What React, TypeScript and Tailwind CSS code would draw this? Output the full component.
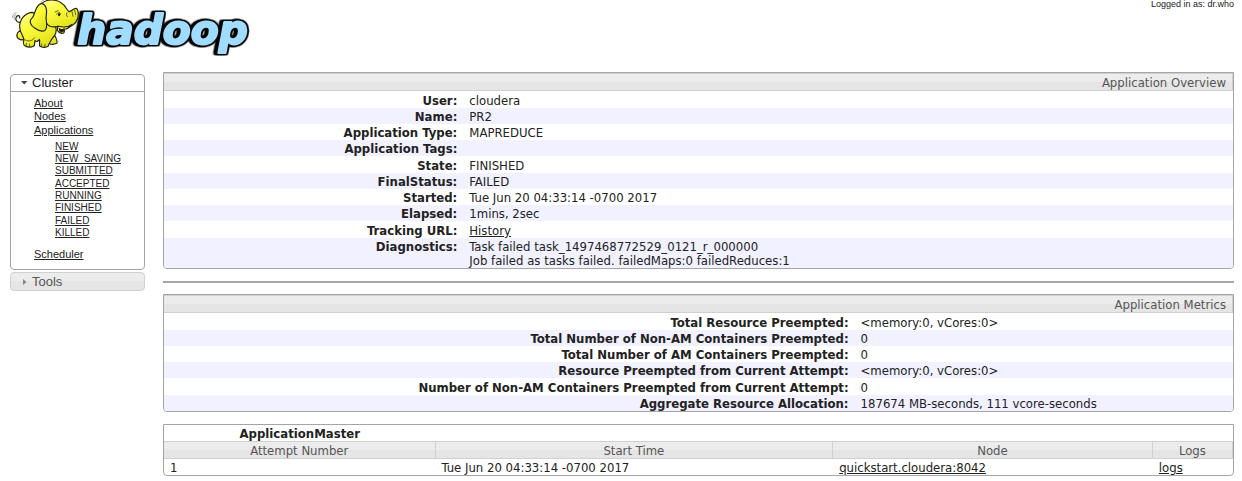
import React from "react";

type Field = { label: string; value: React.ReactNode };

const linkClass = "text-[#222] underline";

const overview: Field[] = [
  { label: "User:", value: "cloudera" },
  { label: "Name:", value: "PR2" },
  { label: "Application Type:", value: "MAPREDUCE" },
  { label: "Application Tags:", value: "" },
  { label: "State:", value: "FINISHED" },
  { label: "FinalStatus:", value: "FAILED" },
  { label: "Started:", value: "Tue Jun 20 04:33:14 -0700 2017" },
  { label: "Elapsed:", value: "1mins, 2sec" },
  { label: "Tracking URL:", value: <a href="#history" className={linkClass}>History</a> },
  {
    label: "Diagnostics:",
    value: (
      <>
        <div>Task failed task_1497468772529_0121_r_000000</div>
        <div>Job failed as tasks failed. failedMaps:0 failedReduces:1</div>
      </>
    ),
  },
];

const metrics: Field[] = [
  { label: "Total Resource Preempted:", value: "<memory:0, vCores:0>" },
  { label: "Total Number of Non-AM Containers Preempted:", value: "0" },
  { label: "Total Number of AM Containers Preempted:", value: "0" },
  { label: "Resource Preempted from Current Attempt:", value: "<memory:0, vCores:0>" },
  { label: "Number of Non-AM Containers Preempted from Current Attempt:", value: "0" },
  { label: "Aggregate Resource Allocation:", value: "187674 MB-seconds, 111 vcore-seconds" },
];

const states = ["NEW", "NEW_SAVING", "SUBMITTED", "ACCEPTED", "RUNNING", "FINISHED", "FAILED", "KILLED"];

const barClass = "border border-[#d0d0d0] bg-linear-to-b from-[#ececec] from-50% to-[#e5e5e5] to-50% text-[#555]";

function Logo() {
  return (
    <svg viewBox="30 0 720 168" className="h-14 w-60" role="img" aria-label="hadoop">
      <defs>
        <linearGradient id="skin" x1="0" y1="0" x2="0.6" y2="1">
          <stop offset="0" stopColor="#ffff9a" />
          <stop offset="0.45" stopColor="#fbfb3c" />
          <stop offset="1" stopColor="#e3e11c" />
        </linearGradient>
      </defs>
      <text
        x="232"
        y="133"
        fontSize="122"
        fill="#a0dcff"
        stroke="#a0dcff"
        strokeWidth="6"
        strokeLinejoin="round"
        className="font-['DejaVu_Sans'] font-bold italic [filter:drop-shadow(4px_0_0_#050505)_drop-shadow(-4px_0_0_#050505)_drop-shadow(0_4px_0_#050505)_drop-shadow(0_-4px_0_#050505)_drop-shadow(-7px_0_0_#050505)]"
      >
        hadoop
      </text>
      <g fill="url(#skin)" stroke="#222208" strokeWidth="3.5" strokeLinejoin="round" strokeLinecap="round">
        <path d="M65 68C53 69 45 62 48 53C51 44 61 45 59 54" fill="none" />
        <path d="M62 91C50 98 46 110 57 117C65 122 75 119 78 112Z" />
        <path d="M155 94C164 104 172 116 171 130C159 135 147 134 141 123L135 112Z" />
        <path d="M96 37C73 40 58 60 59 82C60 98 69 106 72 119C69 126 70 135 76 138C84 143 96 141 103 137L105 122C111 126 116 123 118 118C121 124 117 131 119 138C127 144 139 143 145 138C146 129 153 123 157 115C167 105 171 93 167 80L142 53Z" />
        <path d="M126 10C140 -4 170 -2 184 9C196 16 198 27 207 35C213 34 219 29 223 26C231 22 235 30 235 42C235 63 222 76 204 82C193 86 181 82 174 79C154 84 138 77 137 60Z" />
        <path d="M124 10C105 17 107 38 98 52C85 63 91 76 105 85C119 95 136 98 139 84C143 70 136 58 139 46C142 29 138 12 124 10Z" />
        <path d="M174 79C169 90 174 99 185 100C194 101 195 93 191 88C201 88 211 80 215 74C201 85 186 81 174 79Z" />
        <path d="M178 86C184 90 188 90 192 87C193 94 185 98 180 94Z" fill="#171707" />
        <path d="M170 43C174 34 180 34 182 44M165 36L174 32M201 38C198 41 199 47 202 50M216 35L219 49M224 31L227 44" fill="none" strokeWidth="2" />
        <ellipse cx="177" cy="44" rx="3" ry="5" fill="#171707" stroke="none" />
        <path d="M78 137L79 130M88 139L89 132M124 139L125 132M134 140L135 133M76 120C87 126 98 122 104 113" fill="none" strokeWidth="2" />
        <path d="M38 53C36 45 42 39 48 38M43 58C41 50 44 45 48 43M123 7C125 3 128 1 131 0M169 129L176 123" fill="none" stroke="#777" strokeWidth="2" />
      </g>
    </svg>
  );
}

function Panel({ title, fields, labelWidth }: { title: string; fields: Field[]; labelWidth: string }) {
  return (
    <section className="overflow-hidden rounded-b border border-[#a5a5a5]">
      <table className="w-full table-fixed border-separate border-spacing-0 text-[13px] leading-[14px]">
        <colgroup>
          <col className={labelWidth} />
          <col />
        </colgroup>
        <thead>
          <tr>
            <th colSpan={2} className={`${barClass} h-[18px] border-l-0 px-1.5 pt-px text-right font-normal`}>{title}</th>
          </tr>
        </thead>
        <tbody className="[&>tr:nth-child(4n+1)]:h-[17px]">
          {fields.map((f) => (
            <tr key={f.label} className="h-4 align-bottom last:align-top even:bg-[#f1f1ff]">
              <th scope="row" className="px-1.5 pt-0.5 text-right font-bold">{f.label}</th>
              <td className="px-1.5 pt-0.5">{f.value}</td>
            </tr>
          ))}
        </tbody>
      </table>
    </section>
  );
}

function Sidebar() {
  return (
    <nav className="flex w-[135px] shrink-0 flex-col gap-0.5 pt-0.5 font-['Liberation_Sans',sans-serif]">
      <section className="rounded border border-[#a5a5a5]">
        <button type="button" className="flex h-[17px] w-full items-center gap-1 border-b border-[#a5a5a5] pl-[9px] text-[13px] leading-4 text-[#222]">
          <svg viewBox="0 0 8 8" className="size-2" aria-hidden="true"><path d="M1 2h6.500L4.200 5.500z" fill="#444" /></svg>
          Cluster
        </button>
        <ul className="px-[23px] pt-[5px] pb-2 text-[11px] leading-[13px]">
          <li><a href="#about" className={linkClass}>About</a></li>
          <li><a href="#nodes" className={linkClass}>Nodes</a></li>
          <li className="pt-px">
            <a href="#applications" className={linkClass}>Applications</a>
            <ul className="pt-1 pb-[9px] pl-[21px] text-[10px] leading-3 [&>li:nth-child(3n)]:h-[13px]">
              {states.map((s) => (
                <li key={s} className="h-3"><a href={`#${s}`} className={linkClass}>{s}</a></li>
              ))}
            </ul>
          </li>
          <li><a href="#scheduler" className={linkClass}>Scheduler</a></li>
        </ul>
      </section>
      <button type="button" className={`${barClass} flex h-[19px] w-full items-center gap-1 rounded pl-[9px] text-[13px] leading-4`}>
        <svg viewBox="0 0 8 8" className="size-2" aria-hidden="true"><path d="M3 1v6l3.500-3z" fill="#888" /></svg>
        Tools
      </button>
    </nav>
  );
}

function Attempts() {
  const headings = ["Attempt Number", "Start Time", "Node", "Logs"];
  return (
    <section className="mt-3 overflow-hidden rounded-b border border-[#a5a5a5]">
      <table className="w-full table-fixed border-separate border-spacing-0 text-[13px] leading-[14px]">
        <colgroup>
          <col className="w-[25.4%]" />
          <col className="w-[37.2%]" />
          <col className="w-[29.9%]" />
          <col />
        </colgroup>
        <thead>
          <tr className="h-4">
            <th className="pt-0.5 font-bold">ApplicationMaster</th>
          </tr>
          <tr>
            {headings.map((h) => (
              <th key={h} scope="col" className={`${barClass} h-[18px] border-l-0 pt-px font-normal`}>{h}</th>
            ))}
          </tr>
        </thead>
        <tbody>
          <tr className="h-4">
            <td className="px-1.5 pt-0.5">1</td>
            <td className="px-1.5 pt-0.5">Tue Jun 20 04:33:14 -0700 2017</td>
            <td className="px-1.5 pt-0.5"><a href="#node" className={linkClass}>quickstart.cloudera:8042</a></td>
            <td className="px-1.5 pt-0.5"><a href="#logs" className={linkClass}>logs</a></td>
          </tr>
        </tbody>
      </table>
    </section>
  );
}

export default function App() {
  return (
    <div className="bg-white font-['DejaVu_Sans_Condensed','DejaVu_Sans',sans-serif] text-[#222]">
      <header className="flex h-[72px] items-start justify-between pr-2 pl-2.5">
        <Logo />
        <p className="font-['Liberation_Sans',sans-serif] text-[9px] leading-2">Logged in as: dr.who</p>
      </header>
      <div className="flex items-start gap-[18px] pr-2 pl-2.5">
        <Sidebar />
        <main className="min-w-0 flex-1">
          <Panel title="Application Overview" fields={overview} labelWidth="w-[28%]" />
          <hr className="mt-3 mb-[11px] border-t-2 border-[#a5a5a5]" />
          <Panel title="Application Metrics" fields={metrics} labelWidth="w-[64.6%]" />
          <Attempts />
        </main>
      </div>
    </div>
  );
}
